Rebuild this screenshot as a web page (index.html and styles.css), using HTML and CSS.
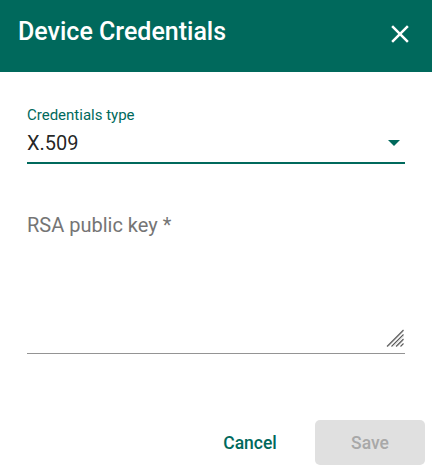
FILE: index.html
```html
<!DOCTYPE html>
<html lang="en">
<head>
<meta charset="utf-8">
<title>Device Credentials</title>
<link rel="stylesheet" href="styles.css">
</head>
<body>
<div class="dialog">
  <header class="dlg-header">
    <h2 class="dlg-title">Device Credentials</h2>
    <button class="close-btn" type="button" aria-label="Close">
      <svg viewBox="0 0 24 24" width="30" height="30"><path d="M19 6.41L17.59 5 12 10.590 6.41 5 5 6.41 10.59 12 5 17.59 6.41 19 12 13.41 17.59 19 19 17.59 13.41 12z"/></svg>
    </button>
  </header>
  <div class="dlg-content">
    <div class="field select-field">
      <label class="float-label">Credentials type</label>
      <div class="select-row">
        <span class="select-value">X.509</span>
        <span class="select-arrow"></span>
      </div>
    </div>
    <div class="field textarea-field">
      <textarea class="key-input" placeholder="RSA public key *"></textarea>
      <svg class="resizer" viewBox="0 0 18 18" width="18" height="18">
        <line x1="1" y1="17.5" x2="17.5" y2="1" class="rz-dark"/>
        <line x1="2.5" y1="17.5" x2="17.5" y2="2.5" class="rz-light"/>
        <line x1="5.5" y1="17.5" x2="17.5" y2="5.5" class="rz-dark"/>
        <line x1="7" y1="17.5" x2="17.5" y2="7" class="rz-light"/>
        <line x1="10" y1="17.5" x2="17.5" y2="10" class="rz-dark"/>
        <line x1="11.5" y1="17.5" x2="17.5" y2="11.5" class="rz-light"/>
        <line x1="14.5" y1="17.5" x2="17.5" y2="14.5" class="rz-dark"/>
      </svg>
    </div>
  </div>
  <div class="dlg-actions">
    <button class="btn btn-cancel" type="button">Cancel</button>
    <button class="btn btn-save" type="button" disabled>Save</button>
  </div>
</div>
</body>
</html>
```
FILE: styles.css
```css
* { box-sizing: border-box; }

html, body {
  margin: 0;
  padding: 0;
  background: #ffffff;
}

body {
  font-family: Roboto, "Noto Sans", Arial, sans-serif;
}

.dialog {
  width: 432px;
  height: 467px;
  background: #ffffff;
}

.dlg-header {
  height: 72px;
  background: #00695c;
  padding: 18px 17px 0 18px;
  display: flex;
  justify-content: space-between;
  align-items: flex-start;
}

.dlg-title {
  margin: 0;
  font-size: 25px;
  line-height: 28px;
  font-weight: 500;
  color: #ffffff;
}

.close-btn {
  width: 30px;
  height: 30px;
  margin-top: 1px;
  padding: 0;
  border: none;
  background: transparent;
  display: flex;
}

.close-btn svg {
  fill: #ffffff;
}

.dlg-content {
  padding: 34px 27px 0 27px;
}

.select-field {
  padding-bottom: 7px;
  border-bottom: 2px solid #00695c;
}

.float-label {
  display: block;
  font-size: 15px;
  line-height: 18px;
  color: #00695c;
}

.select-row {
  margin-top: 7px;
  height: 24px;
  display: flex;
  align-items: center;
  justify-content: space-between;
}

.select-value {
  font-size: 20px;
  line-height: 24px;
  color: rgba(0, 0, 0, 0.87);
}

.select-arrow {
  width: 0;
  height: 0;
  border-left: 6px solid transparent;
  border-right: 6px solid transparent;
  border-top: 6px solid #00695c;
  margin-right: 5px;
}

.textarea-field {
  position: relative;
  margin-top: 49px;
  padding-bottom: 3px;
  border-bottom: 1px solid #949494;
}

.key-input {
  display: block;
  width: 100%;
  height: 137px;
  padding: 0;
  margin: 0;
  border: none;
  outline: none;
  resize: none;
  background: transparent;
  font-family: Roboto, "Noto Sans", Arial, sans-serif;
  font-size: 20px;
  line-height: 24px;
  color: rgba(0, 0, 0, 0.87);
}

.key-input::placeholder {
  color: #757575;
  opacity: 1;
}

.resizer {
  position: absolute;
  right: 1px;
  bottom: 6px;
}

.rz-dark {
  stroke: #5a5a5a;
  stroke-width: 1.1;
}

.rz-light {
  stroke: #d0d0d0;
  stroke-width: 1;
}

.dlg-actions {
  margin-top: 66px;
  padding-right: 7px;
  display: flex;
  justify-content: flex-end;
  gap: 10px;
}

.btn {
  width: 110px;
  height: 45px;
  border: none;
  border-radius: 5px;
  padding: 0;
  font-family: Roboto, "Noto Sans", Arial, sans-serif;
  font-size: 17.5px;
  font-weight: 500;
  display: flex;
  align-items: center;
  justify-content: center;
}

.btn-cancel {
  background: transparent;
  color: #00695c;
}

.btn-save {
  background: #e0e0e0;
  color: #a8a8a8;
}
```
